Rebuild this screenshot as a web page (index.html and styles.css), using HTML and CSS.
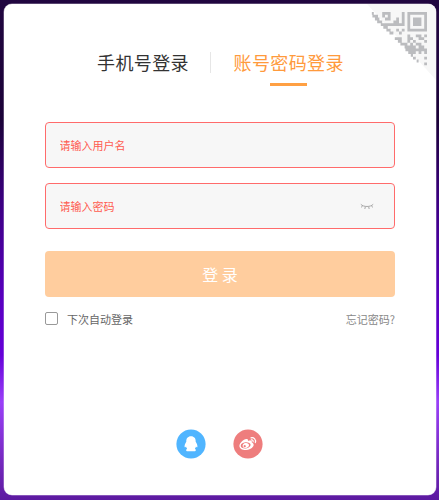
FILE: index.html
```
<!DOCTYPE html>
<html lang="zh-CN">
<head>
  <meta charset="UTF-8">
  <meta name="viewport" content="width=device-width, initial-scale=1.0">
  <title>账号密码登录</title>
  <link rel="stylesheet" href="styles.css">
</head>
<body>
  <div class="login-box">
    <svg class="qrcode" width="69" height="76" viewBox="0 0 69 76">
      <path fill="#f7f7f7" d="M0 0H69V76z"/>
      <g transform="translate(1.2 8) scale(2.8)" fill="#bbbcbf">
        <path fill-rule="evenodd" d="M14 0h7v7h-7zM15 1v5h5V1zM16 2h3v3h-3z"/>
        <path d="M1.3 0h.7v1h-.7zM5 0h3v1h-3zM12 0h1v5h-1zM1.5 1h2v1h-2zM5 1h1v1h-1zM7 1h1v2h-1zM2.4 2h1.6v1h-1.6zM6 2h1v1h-1zM10 2h1v2h-1zM3.2 3h1.8v1h-1.8zM9 3h1v1h-1zM4.5 4h3.5v1h-3.5zM9 4h4v1h-4zM5.4 5h1.6v1h-1.6zM8 4h1v1h-1zM6.5 6h1.5v1h-1.5zM10 6h1v1h-1zM12 6h1v1h-1zM11 7h1v1h-1zM7.6 7h1.4v1h-1.4zM14 8h1v2h-1zM17 8h2v1h-2zM20 8h1v1h-1zM15 9h1v1h-1zM18 9h2v1h-2zM9.5 9h2.5v1h-2.5zM10.6 10h1.4v1h-1.4zM14 10h1v1h-1zM16 10h1v1h-1zM20 10h1v1h-1zM11.5 11h2.5v1h-2.5zM15 11h1v1h-1zM17 11h2v1h-2zM13 12h4v1h-4zM18 12h2v1h-2zM13.3 13h7.7v1h-7.7zM14.3 14h2.7v1h-2.7zM18 14h1v1h-1zM20 14h1v1h-1zM15.2 15h.8v1h-.8zM16 16h1v1h-1zM20 16h1v1h-1zM17.3 17h.7v1h-.7zM20 18h1v1h-1z"/>
      </g>
    </svg>
    <div class="tabs">
      <a class="tab">手机号登录</a>
      <a class="tab active">账号密码登录</a>
    </div>
    <form class="login-form">
      <div class="field field-user">
        <input type="text" placeholder="请输入用户名">
      </div>
      <div class="field">
        <input type="password" placeholder="请输入密码">
        <svg class="eye" width="14" height="8" viewBox="0 0 14 8" fill="none" stroke="#a8a8a8" stroke-width="1">
          <path d="M.8 2.3C3.5 5.2 10.5 5.2 13.2 2.3M2.8 3.8L1 5.4M5.4 4.6L4.8 7M8.6 4.6L9.2 7M11.2 3.8L13 5.4"/>
        </svg>
      </div>
      <button class="submit" type="button">登 录</button>
      <div class="options">
        <label class="remember"><input type="checkbox">下次自动登录</label>
        <a class="forgot">忘记密码?</a>
      </div>
    </form>
    <div class="socials">
      <svg width="30" height="30" viewBox="0 0 30 30">
        <circle cx="15" cy="15" r="14.6" fill="#50b5ff"/>
        <path fill="#fff" d="M15 7.2c-3.2 0-4.9 2.3-4.7 5.5-1 1.6-2 3.5-1.7 5.3.2.8.9.1 1.4-.6.2.9.6 1.6 1.2 2.3-1.2.5-1.6 2.6.5 2.6h6.6c2.1 0 1.7-2.1.5-2.6.6-.7 1-1.4 1.2-2.3.5.7 1.2 1.4 1.4.6.3-1.8-.7-3.7-1.7-5.3.2-3.2-1.5-5.5-4.7-5.5z"/>
      </svg>
      <svg width="30" height="30" viewBox="0 0 30 30">
        <circle cx="15" cy="15" r="14.6" fill="#ee7d7d"/>
        <path fill="#fff" fill-rule="evenodd" d="M13.3 10c1.4-.3 2.1.6 1.6 2 2.1-.8 4.5-.7 3.9 1.4 2.1.7 2.3 2.5 1.3 4.2-1.4 2.3-4.5 3.6-7.5 3.5-3.4-.1-6.3-1.8-6.2-4.4.2-2.8 4-6.2 6.9-6.7zM12.4 13.3c-2.8.3-4.8 1.8-4.7 3.6.1 1.7 2.4 2.8 5.2 2.5s4.8-1.9 4.7-3.6-2.4-2.8-5.2-2.5z"/>
        <path fill="#fff" fill-rule="evenodd" d="M12.3 14.1c2-.4 3.8.6 3.7 2.2-.1 1.4-1.5 2.6-3.3 2.7-1.8.1-3.1-.9-3.1-2.3.1-1.3 1.2-2.4 2.7-2.6zM11.7 16a1.1 1.1 0 1 0 .01 0z"/>
        <path fill="none" stroke="#fff" stroke-width="1.2" stroke-linecap="round" d="M18 8.8c3-.7 5.3 1.8 4.3 4.8M18.3 10.9c1.3-.2 2.2.7 1.8 2"/>
      </svg>
    </div>
  </div>
</body>
</html>
```

FILE: styles.css
```
* {
  box-sizing: border-box;
}
body {
  margin: 0;
  height: 500px;
  padding: 4px 3px 5px 4px;
  overflow: hidden;
  font-family: "Noto Sans CJK SC", sans-serif;
  background: linear-gradient(#210640 0, #1b0238 120px, #3b0080 200px, #5900c0 300px, #6500d8 355px, #9a40f8 402px, #7629c0 460px, #5c1aa0 500px);
}
.login-box {
  position: relative;
  height: 491px;
  padding: 45px 41px 0;
  border-radius: 8px;
  background: #fff;
  overflow: hidden;
  box-shadow: 0 0 0 0.5px rgba(255, 255, 255, 0.5);
}
.qrcode {
  position: absolute;
  top: 0;
  right: 0;
}
.tabs {
  display: flex;
  padding-left: 52px;
  font-size: 18px;
  line-height: 27px;
  letter-spacing: 0.4px;
}
.tab {
  color: #333;
}
.tab.active {
  display: flex;
  flex-direction: column;
  align-items: center;
  color: #ff9a3c;
}
.tab.active::after {
  content: "";
  width: 37px;
  height: 3px;
  margin-top: 7px;
  background: #ffa043;
}
.tab:first-child {
  height: 21px;
  margin: 3px 22.5px 0 0;
  padding-right: 21px;
  line-height: 21px;
  border-right: 1px solid #e6e6e6;
}
.login-form {
  margin-top: 35.5px;
}
.field {
  display: flex;
  align-items: center;
  height: 46px;
  margin-bottom: 22px;
  padding: 1px 20px 0 13.5px;
  border: 1px solid #ff6b6b;
  border-radius: 4px;
  background: #f7f7f7;
}
.field-user {
  margin-bottom: 15px;
}
.field input {
  flex: 1;
  min-width: 0;
  padding: 0;
  border: 0;
  outline: 0;
  background: none;
  font-family: inherit;
  font-size: 11px;
}
.field input::placeholder {
  color: #ff5c50;
}
.submit {
  display: block;
  width: 100%;
  height: 46px;
  padding: 0;
  border: 0;
  border-radius: 4px;
  background: #ffcd9e;
  color: #fff;
  font-family: inherit;
  font-size: 16px;
}
.options {
  display: flex;
  justify-content: space-between;
  align-items: center;
  margin-top: 14px;
  font-size: 11px;
  line-height: 16px;
}
.remember {
  display: flex;
  align-items: center;
  color: #666;
}
.remember input {
  appearance: none;
  width: 13px;
  height: 13px;
  margin: 0 9px 0 0;
  border: 1px solid #999;
  border-radius: 2px;
  background: #fff;
}
.forgot {
  color: #888;
}
.socials {
  display: flex;
  justify-content: center;
  gap: 27px;
  margin: 102px 1px 0 0;
}
```
